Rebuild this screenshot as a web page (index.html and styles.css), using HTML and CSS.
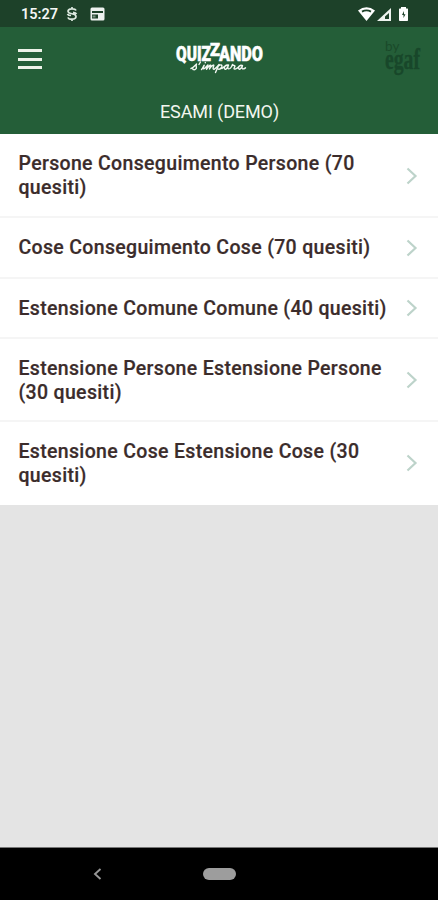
FILE: index.html
```html
<!DOCTYPE html>
<html lang="it">
<head>
<meta charset="utf-8">
<title>Quizzando</title>
<link rel="stylesheet" href="styles.css">
</head>
<body>
<div class="status">
  <span class="clock">15:27</span>
  <svg class="status-s" width="12" height="16" viewBox="0 0 12 16"><path d="M10 4.500C9 2.200 2 2 2 5.300 2 8.800 10 6.700 10 10.500 10 14 2.500 13.800 2 11.300M1.500 7.800C2 9 3 9.500 5 9.500M7 6.300C9 6.500 10 7 10.500 8M6 1v2M6 13v2" fill="none" stroke="#dce8df" stroke-width="1.700"/></svg>
  <svg class="status-card" width="15" height="14" viewBox="0 0 15 14"><rect x=".5" y=".5" width="14" height="13" rx="1.500" fill="#eef2ef"/><path d="M2 4h11v2H2zM2 7.500h6v4H2z" fill="#1d4129"/><path d="M2.500 8.500h3v2h-3z" fill="#7d9484"/></svg>
  <span class="spacer"></span>
  <svg width="50" height="17" viewBox="0 0 50 17"><path d="M0 4.500Q8.500-1.800 17 4.500L8.500 15Z" fill="#fff"/><path d="M4 5.600Q8.500 3.200 13 5.600" fill="none" stroke="#1d4129" stroke-width="1.800"/><path d="M33 2v13H19Z" fill="#eef3ef"/><path d="M31 7v6h-4V10.500Z" fill="#1d4129"/><path d="M43 1h5v1.500h1.500q.5 0 .5.700V14.300q0 .7-.7.700H41.700q-.7 0-.7-.7V3.200q0-.7.700-.7H43Z" fill="#fff"/><path d="M46 5l-2 4h1.500v3L47.500 8.200h-1.500Z" fill="#1d4129"/></svg>
</div>
<header class="bar">
  <div class="menu"><i></i><i></i><i></i></div>
  <svg class="logo" width="96" height="38" viewBox="0 0 96 38">
    <g class="brand">
      <text x="5" y="23" textLength="35" lengthAdjust="spacingAndGlyphs">QUIZ</text>
      <text class="z" x="39" y="18" textLength="10" lengthAdjust="spacingAndGlyphs">Z</text>
      <text x="48" y="23" textLength="44" lengthAdjust="spacingAndGlyphs">ANDO</text>
    </g>
    <g class="script"><path d="M20 30.500C22 30 24 27.500 25.500 26 24 29 27 29.500 24.500 31.300 23.500 32 21.500 31.700 22 31M29.500 24l-1.500 2.500M30.500 31.500C32 30 32.500 28 33.200 27.200 32 30 31.500 31.600 33.500 30.500 34.500 30 36 27.500 37 27l-1.500 4.300C37.500 28.500 39.500 26.500 39.700 27.500L38.500 31C40 28.500 42.500 26 42.800 27.500 42 30 41.500 31.800 43.500 31 45.500 30 47 27.500 48 26.500L44.500 34.500M46.500 29C49.500 25.500 52 27 50.500 29.500 49 31.700 47 31.500 46.500 30.500M51 30.500C53 29 54 27.500 56.500 27 53.500 26.500 52 31.800 55 31.200 56.500 30.500 57.500 27 57.500 27 56 30.500 57 31.600 59 30.500 60.500 29.500 61 28 61.500 26.500 62 28 64 27 64 28L63 30.500C63 31.800 66 30.800 67.500 29 68.500 27.500 70.500 27 70.500 27.500 67.500 26.500 66.500 31.700 69 31.200 70.500 30.600 71.500 27.500 71.500 27.500 70 31.500 72 31.500 74.500 29.800M34.300 24.500v.3"/></g>
  </svg>
  <svg class="egaf" width="40" height="40" viewBox="0 0 40 40">
    <text class="by" x="1" y="12">by</text>
    <text class="egaf-text" x="1" y="30" textLength="35" lengthAdjust="spacingAndGlyphs">egaf</text>
  </svg>
</header>
<div class="title">ESAMI (DEMO)</div>
<main class="list">
  <a class="row tall"><span class="t">Persone Conseguimento Persone (70<br>quesiti)</span><svg class="chev" viewBox="0 0 12 18"><path d="M1.500 1.500 9.500 9l-8 7.500"/></svg></a>
  <a class="row"><span class="t">Cose Conseguimento Cose (70 quesiti)</span><svg class="chev" viewBox="0 0 12 18"><path d="M1.500 1.500 9.500 9l-8 7.500"/></svg></a>
  <a class="row"><span class="t">Estensione Comune Comune (40 quesiti)</span><svg class="chev" viewBox="0 0 12 18"><path d="M1.500 1.500 9.500 9l-8 7.500"/></svg></a>
  <a class="row tall"><span class="t">Estensione Persone Estensione Persone<br>(30 quesiti)</span><svg class="chev" viewBox="0 0 12 18"><path d="M1.500 1.500 9.500 9l-8 7.500"/></svg></a>
  <a class="row tall"><span class="t">Estensione Cose Estensione Cose (30<br>quesiti)</span><svg class="chev" viewBox="0 0 12 18"><path d="M1.500 1.500 9.500 9l-8 7.500"/></svg></a>
</main>
<nav class="nav">
  <svg width="9" height="12" viewBox="0 0 9 12"><path d="M7.500 1 2 6l5.500 5" fill="none" stroke="#979797" stroke-width="1.900"/></svg>
  <span class="pill"></span>
</nav>
</body>
</html>
```
FILE: styles.css
```css
* { box-sizing: border-box; }
body {
  margin: 0;
  height: 900px;
  display: flex;
  flex-direction: column;
  background: #e4e4e4;
  font-family: Roboto, sans-serif;
  overflow: hidden;
}
.status {
  height: 27px;
  flex: none;
  display: flex;
  align-items: center;
  padding: 1px 30px 0 21px;
  background: #1d4129;
  color: #f4f7f5;
}
.clock { width: 45px; font-size: 14.5px; font-weight: 600; line-height: 16px; padding-top: 1px; white-space: nowrap; }
.status-card { margin-left: 12px; }
.spacer { flex: 1; }
.bar {
  height: 63px;
  flex: none;
  display: flex;
  align-items: flex-start;
  padding: 0 14px 0 18px;
  background: #245e38;
}
.menu { width: 24px; margin-top: 22px; display: grid; gap: 5.5px; }
.menu i { height: 3px; background: #edf3e9; }
.logo { margin: 11px 0 0 129px; overflow: visible; }
.brand { font: 900 19.5px Roboto, sans-serif; fill: #fff; stroke: #fff; stroke-width: .5; }
.brand .z { font-size: 18px; }
.script path { fill: none; stroke: #f2f7f2; stroke-width: 1.4; stroke-linecap: round; stroke-linejoin: round; }
.egaf { margin: 12px 0 0 auto; overflow: visible; }
.by { font: 13.5px Lato, sans-serif; fill: #1a4a2a; }
.egaf-text { font: bold 29px "Liberation Serif", serif; fill: #18472a; stroke: #18472a; stroke-width: .3; }
.title {
  height: 44px;
  flex: none;
  padding-left: 1px;
  background: #245e38;
  color: #f3f6ef;
  font-size: 18px;
  line-height: 44px;
  letter-spacing: -.1px;
  text-align: center;
}
.list { flex: 1; }
.row {
  height: 60.5px;
  display: flex;
  align-items: center;
  justify-content: space-between;
  padding: 1px 20px 0 18.5px;
  background: #fff;
  border-bottom: 2px solid #f5f5f5;
}
.row.tall { height: 83.4px; }
.row:first-child { height: 84px; }
.row:last-child { height: 82.6px; border-bottom-color: #fff; }
.t { color: #3b2c2b; font-size: 19.5px; font-weight: 500; line-height: 24px; letter-spacing: .33px; white-space: nowrap; padding-top: 1px; -webkit-text-stroke: .2px #3b2c2b; }
.chev { width: 12px; height: 18px; flex: none; }
.chev path { fill: none; stroke: #bdd3ca; stroke-width: 2.2; }
.nav {
  height: 53px;
  flex: none;
  display: flex;
  align-items: center;
  padding-left: 93px;
  gap: 101px;
  background: #000;
  border-top: 1px solid #777;
}
.pill { width: 33px; height: 12px; border-radius: 6px; background: #9d9d9d; }
```
